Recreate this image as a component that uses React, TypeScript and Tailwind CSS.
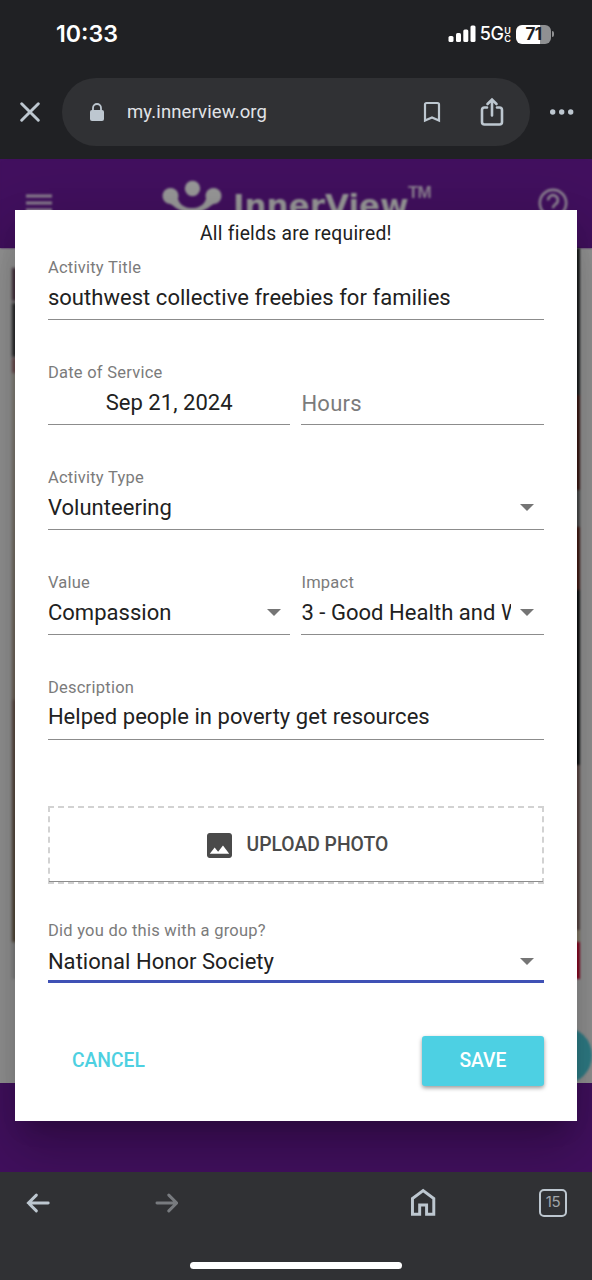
import type { ReactNode } from "react"

interface FieldProps {
  label?: string
  children: ReactNode
  arrow?: boolean
  focused?: boolean
  valueClass?: string
}

function Arrow() {
  return (
    <svg width="14" height="7" viewBox="0 0 14 7" className="mr-[9.500px] mb-px shrink-0">
      <path d="M0 0h14L7 7z" fill="#757575" />
    </svg>
  )
}

function Field({ label, children, arrow, focused, valueClass = "" }: FieldProps) {
  return (
    <div className="min-w-0 flex-1">
      <div className="h-5 text-[16.5px] leading-5 tracking-[0.25px] text-[#7b7b7b]">{label}</div>
      <div
        className={`flex h-[42px] items-center ${
          focused ? "border-b-[3px] border-[#3f51b5] pt-[3px]" : "border-b border-[#8c8c8c]"
        }`}
      >
        <div
          className={`min-w-0 flex-1 overflow-hidden text-[22px] leading-[30px] tracking-[0.04px] whitespace-nowrap text-[#212121] ${valueClass}`}
        >
          {children}
        </div>
        {arrow && <Arrow />}
      </div>
    </div>
  )
}

function StatusBar() {
  return (
    <div className="flex h-[68px] items-center justify-between pr-[38px] pl-[56px] text-white">
      <span className="font-[Inter] text-[23.2px] leading-7 font-semibold">10:33</span>
      <div className="flex items-center">
        <svg width="28" height="18" viewBox="0 0 28 18" fill="#fff">
          <rect x="0.5" y="11" width="5" height="6" rx="1.5" />
          <rect x="8" y="8" width="5" height="9" rx="1.5" />
          <rect x="15.300" y="4.500" width="5" height="12.500" rx="1.5" />
          <rect x="22.500" y="0.500" width="5" height="16.500" rx="1.5" />
        </svg>
        <span className="ml-[4px] font-[Inter] text-[18px] leading-5 font-medium tracking-[-0.5px]">5G</span>
        <span className="ml-px flex flex-col font-[Inter] text-[9px] leading-[9px] font-semibold">
          <span className="h-[8.500px]">U</span>
          <span className="h-[8.500px]">C</span>
        </span>
        <div className="ml-[5px] flex h-[19px] w-[35px] items-center justify-center rounded-[6px] bg-linear-to-r from-white from-70% to-[#8f9092] to-70% font-[Inter] text-[17px] leading-none font-bold tracking-[-0.5px] text-[#202124]">
          71
        </div>
        <div className="ml-px h-[6px] w-[2px] rounded-r-full bg-[#8f9092]" />
      </div>
    </div>
  )
}

function AddressBar() {
  return (
    <div className="flex h-[91px] items-start pt-[10px]">
      <div className="flex h-[68px] w-[62px] items-center pl-[20px]">
        <svg width="20" height="20" viewBox="0 0 20 20" stroke="#bdc7d0" strokeWidth="2.900" strokeLinecap="round">
          <path d="M1.700 1.700l16.600 16.600M18.300 1.700L1.700 18.300" />
        </svg>
      </div>
      <div className="flex h-[68px] w-[468px] items-center rounded-full bg-[#303134] pl-[27px]">
        <svg width="16" height="19" viewBox="0 0 16 19">
          <path d="M4 8V5a4 4 0 0 1 8 0v3" fill="none" stroke="#bdc7d0" strokeWidth="1.800" />
          <rect x="1" y="7" width="14" height="11" rx="2" fill="#bdc7d0" />
        </svg>
        <span className="ml-[22px] w-[296px] pt-[2px] font-[Roboto] text-[18.5px] tracking-[0.13px] text-[#e0e3e7]">
          my.innerview.org
        </span>
        <svg width="18" height="22" viewBox="0 0 18 22" fill="none" stroke="#bdc7d0" strokeWidth="2.200">
          <path d="M2 19.500V3.500a1.500 1.500 0 0 1 1.500-1.500h11A1.500 1.500 0 0 1 16 3.500v16l-7-3z" />
        </svg>
        <svg
          width="24"
          height="30"
          viewBox="0 0 24 30"
          fill="none"
          stroke="#bdc7d0"
          strokeWidth="2.600"
          strokeLinecap="round"
          className="ml-[39px]"
        >
          <path d="M7 10.500H4.500A2.500 2.500 0 0 0 2 13v12A2.500 2.500 0 0 0 4.500 27.500h15a2.500 2.500 0 0 0 2.500-2.500V13a2.500 2.500 0 0 0-2.500-2.500H17" />
          <path d="M12 18.500V3M7.500 7L12 2.500 16.500 7" />
        </svg>
      </div>
      <div className="flex h-[68px] items-center pl-[20px]">
        <svg width="24" height="6" viewBox="0 0 24 6" fill="#bdc7d0">
          <circle cx="2.700" cy="3" r="2.700" />
          <circle cx="11.700" cy="3" r="2.700" />
          <circle cx="20.700" cy="3" r="2.700" />
        </svg>
      </div>
    </div>
  )
}

function SiteHeader() {
  return (
    <div className="flex h-[89px] items-start bg-[#42105f] blur-[1px]">
      <svg width="26" height="22" viewBox="0 0 26 22" stroke="#8d8292" strokeWidth="3.200" className="mt-[34px] ml-[26px]">
        <path d="M0 3h26M0 10h26M0 17h26" />
      </svg>
      <svg width="60" height="42" viewBox="0 0 60 42" fill="#999" className="mt-[20px] ml-[110px]">
        <circle cx="30.500" cy="9.500" r="7.700" />
        <circle cx="8.500" cy="17" r="8" />
        <circle cx="51.500" cy="17" r="8" />
        <path d="M4 23c8 2 10 10 26 11 16-1 18-9 26-11l-10-12c-1 10-4 18-16 18S15 21 14 11z" />
      </svg>
      <span className="mt-[26px] ml-[11px] w-[175px] font-['DejaVu_Sans'] text-[31px] leading-10 font-bold text-[#999]">
        InnerView
      </span>
      <span className="mt-[20px] font-['Liberation_Sans'] text-[17px] leading-7 font-bold tracking-[-0.8px] text-[#8d8292]">
        TM
      </span>
      <svg
        width="30"
        height="30"
        viewBox="0 0 28 28"
        fill="none"
        stroke="#8d8292"
        strokeWidth="2.500"
        className="mt-[29px] mr-[24px] ml-auto shrink-0"
      >
        <circle cx="14" cy="14" r="12.300" />
        <path d="M9.500 11.500a4.500 4.500 0 1 1 7 3.500c-1.800 1.200-2.500 1.800-2.500 4" />
      </svg>
    </div>
  )
}

function SiteBody() {
  return (
    <div className="flex h-[835px] justify-between bg-[#969696] px-[12px]">
      <div className="flex w-[8px] flex-col pt-[20px] blur-[1.5px]">
        <div className="h-[33px] bg-[#43303c]" />
        <div className="mt-[2px] h-[54px] bg-[#2b2b2d]" />
        <div className="mt-[1px] h-[15px] bg-[#6b4c4e]" />
        <div className="h-[327px] bg-linear-to-b from-[#85827a] to-[#6d6257]" />
        <div className="h-[242px] bg-linear-to-b from-[#5c4a42] to-[#514637]" />
        <div className="h-[37px] bg-[#838383]" />
      </div>
      <div className="flex w-[8px] flex-col blur-[1.2px]">
        <div className="h-[147px] bg-[#1d1f20]" />
        <div className="h-[95px] bg-[#3a1814]" />
        <div className="h-[37px] bg-[#4a4a4a]" />
        <div className="h-[63px] bg-[#421a15]" />
        <div className="h-[175px] bg-[#101113]" />
        <div className="h-[165px] bg-[#5b4744]" />
        <div className="h-[12px] bg-[#857a68]" />
        <div className="h-[37px] bg-[#8b0924]" />
      </div>
      <div className="absolute top-[868px] right-0 size-[57px] rounded-full bg-[#30808a] blur-[0.8px]" />
    </div>
  )
}

function ActivityDialog() {
  return (
    <div className="absolute top-[50.500px] left-[14.600px] flex h-[911px] w-[562.600px] flex-col bg-white px-[33.300px] font-[Roboto] shadow-[0_15px_21px_-10px_rgba(0,0,0,0.2),0_33px_52px_4px_rgba(0,0,0,0.14),0_12px_63px_11px_rgba(0,0,0,0.12)]">
      <div className="h-[48px] text-center text-[19.300px] leading-[48px] tracking-[0.25px] text-[#212121]">
        All fields are required!
      </div>
      <div className="flex flex-col gap-[43px]">
        <div className="flex">
          <Field label="Activity Title">southwest collective freebies for families</Field>
        </div>
        <div className="flex gap-[11px]">
          <Field label="Date of Service">
            <div className="text-center">Sep 21, 2024</div>
          </Field>
          <Field valueClass="pt-[2px]">
            <span className="tracking-[0.25px] text-[#7b7b7b]">Hours</span>
          </Field>
        </div>
        <div className="flex">
          <Field label="Activity Type" arrow>
            Volunteering
          </Field>
        </div>
        <div className="flex gap-[11px]">
          <Field label="Value" arrow>
            Compassion
          </Field>
          <Field label="Impact" arrow>
            <div className="mr-[9px] overflow-hidden">3 - Good Health and Well-being</div>
          </Field>
        </div>
        <div className="flex">
          <Field label="Description" valueClass="pb-[3px]">
            Helped people in poverty get resources
          </Field>
        </div>
      </div>

      <div className="mt-[66px] flex h-[78px] shrink-0 flex-col border-2 border-dashed border-[#d2d2d2]">
        <div className="-mx-px flex flex-1 items-center justify-center border-b border-[#8c8c8c] pt-[3px] pl-[3px] text-[19.300px] font-medium text-[#4a4a4a]">
          <svg width="25" height="25" viewBox="3 3 18 18" fill="#4a4a4a" className="mr-[15px]">
            <path d="M21 19V5c0-1.100-.9-2-2-2H5c-1.100 0-2 .9-2 2v14c0 1.100.9 2 2 2h14c1.100 0 2-.9 2-2zM8.500 13.500l2.500 3.010L14.500 12l4.500 6H5l3.500-4.500z" />
          </svg>
          UPLOAD PHOTO
        </div>
      </div>

      <div className="mt-[37px] flex">
        <Field label="Did you do this with a group?" arrow focused>
          National Honor Society
        </Field>
      </div>

      <div className="mt-[53px] flex h-[50px] shrink-0 items-center justify-between text-[19.300px] font-medium">
        <button className="pt-[2px] pl-6 text-[#4dd0e1]">CANCEL</button>
        <button className="h-[50px] w-[122px] rounded-[3px] bg-[#4dd0e3] pt-[2px] text-white shadow-[0_2px_4px_rgba(0,0,0,0.4)]">
          SAVE
        </button>
      </div>
    </div>
  )
}

function Toolbar() {
  return (
    <div className="relative z-10 flex h-[108px] flex-col items-center bg-[#303134]">
      <div className="flex h-[61px] w-full items-center px-[26px]">
        <svg width="24" height="20" viewBox="0 0 24 20" fill="none" stroke="#bdc7d0" strokeWidth="3" strokeLinecap="round">
          <path d="M22.500 10H2.500M10.500 2l-8 8 8 8" />
        </svg>
        <svg
          width="24"
          height="20"
          viewBox="0 0 24 20"
          fill="none"
          stroke="#787b7f"
          strokeWidth="3"
          strokeLinecap="round"
          className="ml-[105px]"
        >
          <path d="M2 10h20M14 2l8 8-8 8" />
        </svg>
        <svg width="26" height="29" viewBox="0 0 26 29" fill="none" stroke="#bdc7d0" strokeWidth="3" className="ml-[232px]">
          <path d="M2.500 26.500V10.500L13.300 2.500l10.800 8v16h-7.300V17h-7v9.500z" />
        </svg>
        <div className="ml-[102px] flex size-[28px] shrink-0 translate-x-px items-center justify-center rounded-[5px] border-2 border-[#bdc7d0] font-[Inter] text-[15px] tracking-[-0.3px] text-[#a0a5aa]">
          15
        </div>
      </div>
      <div className="mt-[29px] h-[7px] w-[212px] rounded-full bg-white" />
    </div>
  )
}

export default function App() {
  return (
    <div className="flex h-[1280px] w-[592px] flex-col overflow-hidden bg-[#202124]">
      <StatusBar />
      <AddressBar />
      <div className="relative h-[1013px] overflow-hidden bg-[#42105f]">
        <SiteHeader />
        <SiteBody />
        <ActivityDialog />
      </div>
      <Toolbar />
    </div>
  )
}
